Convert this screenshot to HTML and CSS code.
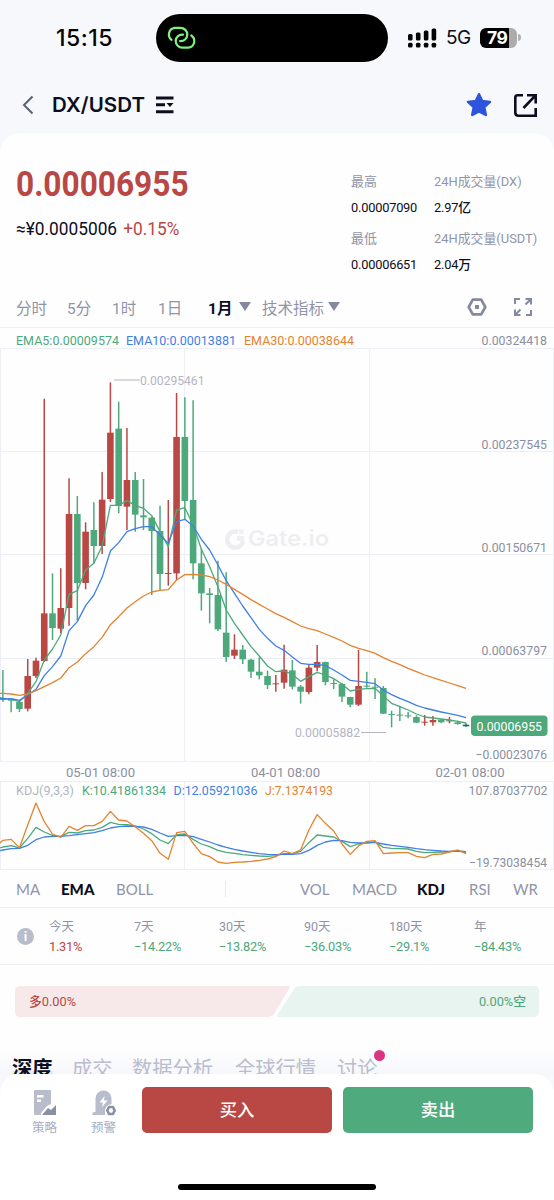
FILE: index.html
```html
<!DOCTYPE html>
<html lang="zh-CN">
<head>
<meta charset="utf-8">
<title>DX/USDT</title>
<link rel="stylesheet" href="styles.css">
</head>
<body>
<div class="phone">
  <header class="status">
    <div class="clock">15:15</div>
    <div class="island">
      <svg width="32" height="26" viewBox="0 0 32 26" fill="none" stroke="#7df27e" stroke-width="2.2" stroke-linecap="round">
        <path d="M5.500 14.800A6.700 6.700 0 0 1 8.500 2.900H14.500A6.800 6.800 0 0 1 21.300 9.700A6.500 6.500 0 0 1 14 16"/>
        <path d="M25.300 10.500A6.700 6.700 0 0 1 22.300 22.700H16.500A6.800 6.800 0 0 1 9.700 15.900A6.500 6.500 0 0 1 17 9.700"/>
      </svg>
    </div>
    <div class="signals">
      <svg width="29" height="20" viewBox="0 0 29 20" fill="#050505">
        <rect x="0" y="6" width="4.600" height="6.400" rx="1.500"/><rect x="7.900" y="4.600" width="4.600" height="7.800" rx="1.500"/><rect x="15.800" y="2.600" width="4.600" height="9.800" rx="1.500"/><rect x="23.600" y="0.400" width="4.600" height="12" rx="1.500"/>
        <rect x="0" y="14.800" width="4.600" height="4.600" rx="1.500"/><rect x="7.900" y="14.800" width="4.600" height="4.600" rx="1.500"/><rect x="15.800" y="14.800" width="4.600" height="4.600" rx="1.500"/><rect x="23.600" y="14.800" width="4.600" height="4.600" rx="1.500"/>
      </svg>
      <span class="net">5G</span>
      <span class="battery">79</span><i class="tip"></i>
    </div>
  </header>

  <nav class="nav">
    <svg class="back" width="12" height="20" viewBox="0 0 12 20" fill="none" stroke="#5b6075" stroke-width="2"><path d="M10.500 1.500L2 10L10.500 18.500"/></svg>
    <h1 class="pair">DX/USDT</h1>
    <svg class="menu" width="18" height="18" viewBox="0 0 18 18" fill="#0b0d20"><path d="M0 .4h17.500v3H0zM0 7.300h9v3H0zM0 14.200h17.500v3H0zM10.500 7h7l-3.500 4z"/></svg>
    <svg class="star" width="26" height="26" viewBox="0 0 26 26" fill="#2f54dc" stroke="#2f54dc" stroke-width="2.500" stroke-linejoin="round"><path d="M13 2.200L16.200 9L24 9.900L18.300 15.200L19.800 23L13 19.300L6.200 23L7.700 15.200L2 9.900L9.800 9z"/></svg>
    <svg class="share" width="25" height="25" viewBox="0 0 25 25" fill="none" stroke="#0b0d20" stroke-width="2.600"><path d="M10 2.300H4.500Q2.300 2.300 2.300 4.500V19.500Q2.300 22.700 5.500 22.700H22.700V15M14 2.300H22.700V10.500M22.300 2.700L10.500 15"/></svg>
  </nav>

  <main class="card">
    <section class="summary">
      <div>
        <div class="price"><span>0.00006955</span></div>
        <div class="fiat"><span>≈¥0.0005006 <em>+0.15%</em></span></div>
      </div>
      <dl class="day">
        <div><dt>最高</dt><dd>0.00007090</dd></div>
        <div><dt>24H成交量(DX)</dt><dd>2.97亿</dd></div>
        <div><dt>最低</dt><dd>0.00006651</dd></div>
        <div><dt>24H成交量(USDT)</dt><dd>2.04万</dd></div>
      </dl>
    </section>

    <section class="frames">
      <span class="f1">分时</span><span class="f2">5分</span><span class="f3">1时</span><span class="f4">1日</span><b class="f5">1月</b><i class="tri"></i><span class="f6">技术指标</span><i class="tri"></i>
      <svg class="gear" width="20" height="18" viewBox="0 0 20 18" fill="none" stroke="#8489a0" stroke-width="2.700" stroke-linejoin="round"><path d="M5.800 1.700H14.200L18.300 9L14.200 16.300H5.800L1.700 9z"/><rect x="8" y="7" width="4" height="4" fill="#8489a0" stroke="none"/></svg>
      <svg class="full" width="18" height="18" viewBox="0 0 18 18" fill="none" stroke="#8489a0" stroke-width="2"><path d="M1 6V1H6M11.500 1H17V6.500M16.500 1.500L11.500 6.500M1 11.500V17H6.500M1.500 16.500L6.500 11.500M17 12V17H12"/></svg>
    </section>

    <svg class="chart" id="chart" width="554" height="543" viewBox="0 327 554 543"></svg>

    <section class="indicators">
      <span class="i1">MA</span><b class="i2">EMA</b><span class="i3">BOLL</span><i class="bar"></i><span class="i4">VOL</span><span class="i5">MACD</span><b class="i6">KDJ</b><span class="i7">RSI</span><span class="i8">WR</span>
    </section>

    <section class="returns">
      <span class="info">i</span>
      <div class="up">今天<b>1.31%</b></div>
      <div>7天<b>−14.22%</b></div>
      <div>30天<b>−13.82%</b></div>
      <div>90天<b>−36.03%</b></div>
      <div>180天<b>−29.1%</b></div>
      <div>年<b>−84.43%</b></div>
    </section>

    <section class="ratio">
      <svg width="524" height="31" viewBox="0 0 524 31"><path fill="#f7e9ea" d="M5 0H273Q276 0 274 3L259 28Q257 31 254 31H5Q0 31 0 26V5Q0 0 5 0z"/><path fill="#e8f4f0" d="M284 0H519Q524 0 524 5V26Q524 31 519 31H265Q261 31 263 28L279 3Q281 0 284 0z"/></svg>
      <span class="long">多0.00%</span><span class="short">0.00%空</span>
    </section>

    <section class="tabs">
      <b class="t1"><u>深度</u></b><span class="t2">成交</span><span class="t3">数据分析</span><span class="t4">全球行情</span><span class="t5">讨论<i class="dot"></i></span>
    </section>
  </main>

  <footer class="dock">
    <div class="actions">
      <div class="tool">
        <svg width="24" height="26" viewBox="0 0 24 26"><path fill="#b9bcca" d="M2 0H17Q18 0 18 1V14L14 16L8 23V25H2Q1 25 1 24V1Q1 0 2 0z"/><path fill="#fff" d="M4 5h6.500v2.500H4zM4 9.500h4V12H4z"/><path fill="#8b8fa2" d="M9 25L15 18L18 20L23 15V25z"/></svg>
        策略
      </div>
      <div class="tool">
        <svg width="24" height="26" viewBox="0 0 24 26"><path fill="#b9bcca" d="M3.500 22V8.500A8 8 0 0 1 19.500 8.500V14Q13 15 13 22V25H.5V22.500z"/><path fill="#fff" d="M12.500 6L7.500 12.500H11L10 17L15.500 10.500H12z"/><path d="M17 17H21L22.700 20.500L21 24H17L15.300 20.500z" fill="none" stroke="#8b8fa2" stroke-width="2.600" stroke-linejoin="round"/></svg>
        预警
      </div>
      <button class="buy">买入</button>
      <button class="sell">卖出</button>
    </div>
    <div class="home"></div>
  </footer>
</div>
<script src="chart.js"></script>
</body>
</html>
```
FILE: styles.css
```css
* { box-sizing: border-box; }
body { margin: 0; background: #f7f8fb; font-family: Roboto, "Noto Sans CJK SC", sans-serif; color: #0b0d20; }
h1, dl, dd { margin: 0; }
i, em { font-style: normal; }
svg { display: block; flex: none; }
span, b { white-space: nowrap; }
.phone { width: 554px; height: 1200px; display: flex; flex-direction: column; overflow: hidden; }

.status { height: 77px; flex: none; display: flex; padding-top: 14px; }
.clock { width: 156px; padding-left: 56px; font: 500 23px/48px Inter, sans-serif; letter-spacing: .5px; color: #050505; }
.island { width: 232px; height: 48px; border-radius: 24px; background: #000; padding: 11px 0 0 10px; }
.signals { display: flex; align-items: center; height: 47px; padding-left: 20px; }
.net { font: 400 19px/24px Inter, sans-serif; margin-left: 9px; width: 34px; letter-spacing: -.5px; }
.battery { width: 37px; height: 20px; border-radius: 6px; background: linear-gradient(90deg, #000 29px, #acacae 29px); color: #fff; font: 700 17.500px/20px Inter, sans-serif; padding-left: 7px; letter-spacing: -.5px; }
.tip { width: 3px; height: 7px; margin-left: 1px; border-radius: 0 3px 3px 0; background: #b2b2b4; }

.nav { height: 56px; flex: none; display: flex; align-items: center; padding-left: 22px; }
.pair { font: 600 20.500px/28px Inter, "Noto Sans CJK SC", sans-serif; margin-left: 18px; width: 103.500px; letter-spacing: .1px; white-space: nowrap; }
.star { margin-left: 292.500px; }
.share { margin-left: 21px; }

.card { height: 941px; flex: none; background: #fefeff; border-radius: 20px 20px 0 0; overflow: hidden; display: flex; flex-direction: column; }
.summary { height: 154px; flex: none; display: flex; }
.summary > div { width: 351px; padding: 33px 0 0 16px; }
.price { height: 36px; font: 700 34.500px/36px Roboto, sans-serif; color: #b94743; }
.price span { display: inline-block; transform: scaleX(.917); transform-origin: left; }
.fiat { margin-top: 14px; font-size: 18px; line-height: 26px; font-weight: 450; }
.fiat span { display: inline-block; transform: scaleX(.96); transform-origin: left; }
.fiat em { color: #b94743; font-weight: 400; margin-left: 2px; }
.day { display: grid; grid-template-columns: 83px 115px; grid-auto-rows: 57px; padding-top: 37px; }
.day dt { font-size: 12.900px; line-height: 24px; color: #9094a6; white-space: nowrap; }
.day dd { font-size: 12.800px; line-height: 26px; font-weight: 450; margin-top: 1px; letter-spacing: -.2px; }

.frames { height: 39px; margin-bottom: 1px; flex: none; display: flex; align-items: center; padding-left: 16px; font-size: 15.500px; color: #9094a6; }
.frames b { color: #0b0d20; }
.f1 { width: 51px; } .f2 { width: 45px; } .f3 { width: 46px; } .f4 { width: 50px; } .f5 { width: 31px; } .f6 { margin-left: 11px; width: 66px; }
.tri { border: 6px solid transparent; border-top: 9px solid #8489a0; border-bottom: 0; }
.gear { margin-left: 127px; }
.full { margin-left: 27px; }

.chart { font-family: Roboto, sans-serif; }
.indicators { height: 38px; flex: none; display: flex; align-items: center; padding-left: 16px; font: 400 15px/24px Lato, sans-serif; color: #9094a6; border-bottom: 1px solid #efeff4; }
.indicators b { color: #0b0d20; font-weight: 900; }
.i1 { width: 45px; } .i2 { width: 55px; } .i3 { width: 109px; } .i4 { width: 52px; } .i5 { width: 65px; } .i6 { width: 52px; } .i7 { width: 44px; }
.bar { width: 1px; height: 16px; background: #e9eaf0; margin-right: 74px; }

.returns { height: 57px; flex: none; display: flex; padding: 8px 0 0 16px; border-bottom: 1px solid #efeff4; font-size: 12.500px; line-height: 21px; color: #9094a6; }
.returns div { width: 85px; flex: none; }
.returns b { display: block; font-weight: 450; font-size: 12.800px; line-height: 20px; color: #4da77a; letter-spacing: -.25px; }
.returns .up b { color: #b94743; }
.info { width: 17px; height: 17px; margin: 12px 15px 0 1px; border-radius: 50%; background: #b9bcca; color: #fff; font: 700 13px/17px Roboto, sans-serif; text-align: center; flex: none; }

.ratio { flex: none; display: grid; margin: 20.500px 15px 0; height: 31px; font-size: 12.800px; line-height: 31px; font-weight: 450; }
.ratio > * { grid-area: 1 / 1; }
.long { color: #b94743; padding-left: 14px; }
.short { color: #4da77a; text-align: right; padding-right: 13px; }

.tabs { flex: 1; display: flex; padding: 38px 0 0 12px; font-size: 20.300px; line-height: 28px; color: #babdcd; background: linear-gradient(#fefeff 50%, #f3f4f9); }
.tabs b { color: #0b0d20; }
.tabs u { text-decoration: none; background: linear-gradient(transparent 60%, #d8f1ed 60%); }
.t1 { width: 60px; } .t2 { width: 60px; } .t3 { width: 103px; } .t4 { width: 102px; } .t5 { position: relative; }
.dot { position: absolute; right: -7px; top: -5px; width: 11px; height: 11px; border-radius: 50%; background: #dc357f; }

.dock { height: 126px; flex: none; background: #fff; border-radius: 20px 20px 0 0; padding-top: 13px; }
.actions { display: flex; padding-left: 15px; }
.tool { width: 59px; padding-top: 3px; display: flex; flex-direction: column; align-items: center; font-size: 12.500px; line-height: 20px; color: #a9adbd; gap: 2px; }
.actions button { width: 190.500px; height: 46px; border: 0; border-radius: 5px; color: #fff; font: 500 17.300px/46px Roboto, "Noto Sans CJK SC", sans-serif; padding: 0; }
.buy { background: #b94743; margin: 0 10.500px 0 8.800px; }
.sell { background: #4fab7d; }
.home { width: 198px; height: 6px; border-radius: 3px; background: #000; margin: 46px auto 0; }
```
FILE: chart.js
```js
const svg = document.getElementById('chart');
const NS = 'http://www.w3.org/2000/svg';
const GREEN = '#4da97b', RED = '#b94743', BLUE = '#3f7fe8', ORANGE = '#e4832f';
function add(tag, attrs, text) {
  const el = document.createElementNS(NS, tag);
  for (const k in attrs) el.setAttribute(k, attrs[k]);
  if (text) el.textContent = text;
  svg.appendChild(el);
  return el;
}
const cx = i => 2.9 + 8.27 * i;
const cy = v => 350 + v / 3;

// grid
for (const y of [327.5, 348.5, 451.5, 554.5, 658.5, 761.5, 781.5, 869.5]) add('path', { d: `M0 ${y}H554`, stroke: '#edeef8' });
for (const x of [0.5, 184.5, 369.5, 553.5]) add('path', { d: `M${x} 348V761M${x} 781V869`, stroke: '#edeef8' });

function label(x, y, w, text, fill, size = 13, anchor = 'start') {
  add('text', { x, y, fill, 'font-size': size, textLength: w, lengthAdjust: 'spacingAndGlyphs', 'text-anchor': anchor }, text);
}

// watermark
add('path', { d: 'M238 532A8 8 0 1 0 243 541', fill: 'none', stroke: '#eeeef1', 'stroke-width': 4.5 });
add('path', { d: 'M237 536h7v5h-7zM239 529.500h4.500v4.500h-4.500z', fill: '#f0f0f3' });
add('text', { x: 248, y: 546, fill: '#eeeef1', 'font-size': 21, 'font-weight': 600, 'font-family': 'Inter', textLength: 81, lengthAdjust: 'spacingAndGlyphs' }, 'Gate.io');

// candles: colour, high, body top, body bottom, low
const candles = `g 960 1044 1050 1055|g 1045 1046 1052 1087|g 1050 1056 1077 1086|r 927 978 1076 1084|r 923 932 978 984|r 146 790 933 936|g 670 790 834 870|r 655 774 836 850|r 385 492 774 827|g 438 492 699 812|r 517 545 699 718|g 457 540 588 640|r 366 449 588 612|r 97 248 447 456|g 155 236 468 490|r 234 390 470 540|g 366 390 494 545|g 387 496 502 540|g 500 503 543 735|g 467 543 672 720|r 450 669 672 707|r 129 261 670 690|g 142 261 453 510|g 151 450 640 688|g 595 640 730 782|g 714 730 735 820|g 632 735 838 843|g 667 848 921 936|r 853 899 917 927|g 885 899 928 942|g 926 929 965 984|g 922 965 976 988|g 962 978 1005 1017|r 975 1000 1003 1025|r 884 959 998 1016|g 930 961 1010 1018|g 1005 1010 1025 1061|r 944 953 1026 1033|r 885 936 953 964|g 935 936 996 1006|g 988 999 1002 1017|g 998 1002 1040 1056|g 1040 1041 1064 1072|r 900 1008 1064 1068|g 965 1007 1009 1013|g 985 1010 1013 1047|g 1008 1014 1091 1092|g 1082 1092 1095 1132|g 1067 1094 1097 1113|g 1086 1096 1099 1105|g 1096 1101 1118 1119|r 1095 1115 1118 1127|r 1098 1110 1117 1127|g 1108 1109 1117 1119|r 1101 1111 1114 1120|g 1112 1117 1122 1124|d 1120 1124 1129 1130`;

// each line starts at the left edge of the pane
function line(values, color, y, start) {
  const points = [`0,${y(start)}`, ...values.map((v, i) => `${cx(i)},${y(v)}`)];
  add('polyline', { points: points.join(' '), fill: 'none', stroke: color, 'stroke-width': 1.3, 'stroke-linejoin': 'round' });
}
const ema5 = [1046,1048,1055,1030,995,930,897,855,733,722,660,640,588,466,466,452,466,475,497,545,590,480,473,525,598,650,710,780,820,855,890,918,948,965,963,973,994,980,967,975,986,1002,1023,1018,1016,1015,1038,1060,1070,1080,1092,1101,1104,1107,1110,1114,1119];
const ema10 = [1046,1046,1051,1035,1018,977,950,918,842,815,767,735,682,603,578,545,536,530,530,555,580,515,508,528,568,600,645,692,730,768,803,838,865,888,901,921,940,943,943,947,960,975,991,994,997,1001,1020,1034,1045,1055,1066,1074,1080,1086,1091,1096,1103];
const ema30 = [1030,1032,1036,1032,1022,1010,998,984,953,936,911,890,862,824,800,774,755,738,726,721,719,690,674,673,675,680,690,703,718,733,749,763,777,791,802,815,828,836,842,852,862,873,886,895,902,910,923,934,944,955,965,975,983,991,999,1007,1015];
candles.split('|').forEach((row, i) => {
  const [c, ...n] = row.split(' ');
  const [hi, top, bot, lo] = n.map(Number);
  const fill = c === 'r' ? RED : c === 'd' ? '#2f6f62' : GREEN;
  add('path', { d: `M${cx(i)} ${cy(hi)}V${cy(lo)}`, stroke: fill, 'stroke-width': 1.5 });
  add('rect', { x: cx(i) - 3.3, y: cy(top), width: 6.6, height: Math.max(1, (bot - top) / 3), fill });
});
line(ema5, GREEN, cy, 1044);
line(ema10, BLUE, cy, 1044);
line(ema30, ORANGE, cy, 1030);

const GREY = '#8b8fa0', PALE = '#b3b6c2';
label(16, 345, 103, 'EMA5:0.00009574', GREEN, 12.500);
label(126, 345, 110, 'EMA10:0.00013881', BLUE, 12.500);
label(244, 345, 110, 'EMA30:0.00038644', ORANGE, 12.500);
label(481.500, 345, 65.500, '0.00324418', GREY);
label(481.500, 448.500, 65.500, '0.00237545', GREY);
label(481.500, 552, 65.500, '0.00150671', GREY);
label(481.500, 655, 65.500, '0.00063797', GREY);
label(475.500, 759, 71.500, '−0.00023076', GREY);
add('path', { d: 'M114 380H140M361 732.500H386', stroke: PALE });
label(140, 385, 64.500, '0.00295461', PALE);
label(295, 737, 65, '0.00005882', PALE);
add('rect', { x: 471, y: 715.500, width: 76.500, height: 20.500, rx: 4, fill: GREEN });
label(476.500, 730.500, 65.500, '0.00006955', '#fff');
label(66, 776.500, 69, '05-01 08:00', GREY);
label(251, 776.500, 69, '04-01 08:00', GREY);
label(435.500, 776.500, 69, '02-01 08:00', GREY);

// KDJ pane
const ky = v => 770 + v / 3;
const k = [231,227,234,205,172,186,196,200,187,189,182,180,172,157,163,164,168,177,191,210,221,194,192,208,222,230,241,247,250,254,256,258,259,257,251,251,244,218,195,198,201,214,230,222,217,216,232,235,236,237,244,248,247,246,245,242,248];
const d = [240,236,235,226,209,201,199,199,197,194,191,188,182,174,170,168,169,171,178,189,199,197,196,200,208,216,225,232,238,243,247,251,253,254,253,253,251,241,226,216,211,212,217,219,219,217,222,226,229,232,236,239,241,243,244,243,245];
const j = [211,208,233,165,99,155,192,202,169,181,167,167,154,124,150,153,170,190,212,250,268,188,184,220,251,260,276,280,277,276,274,271,267,260,243,251,240,180,134,160,183,222,253,228,214,212,251,249,248,248,259,263,253,252,246,240,251];
line(k, GREEN, ky, 234);
line(d, BLUE, ky, 242);
line(j, ORANGE, ky, 219);
label(16, 794.500, 58, 'KDJ(9,3,3)', PALE);
label(82, 794.500, 84, 'K:10.41861334', GREEN);
label(173.500, 794.500, 84, 'D:12.05921036', BLUE);
label(265, 794.500, 68, 'J:7.1374193', ORANGE);
label(468.500, 794.500, 79, '107.87037702', GREY);
label(469, 866.500, 78, '−19.73038454', GREY);
```
